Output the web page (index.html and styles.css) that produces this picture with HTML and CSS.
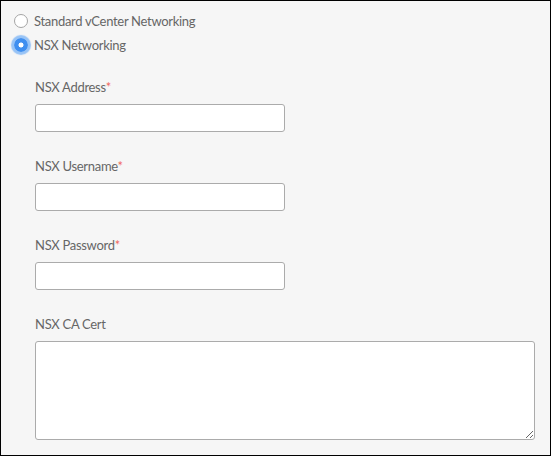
FILE: index.html
```html
<!DOCTYPE html>
<html>
<head>
<meta charset="utf-8">
<link rel="stylesheet" href="styles.css">
</head>
<body>
<div class="frame">
  <div class="radios">
    <label class="radio-row"><span class="radio"></span><span class="radio-text">Standard vCenter Networking</span></label>
    <label class="radio-row"><span class="radio checked"></span><span class="radio-text">NSX Networking</span></label>
  </div>
  <div class="form">
    <div class="field">
      <div class="field-label">NSX Address<span class="req">*</span></div>
      <input class="text-input" type="text">
    </div>
    <div class="field">
      <div class="field-label">NSX Username<span class="req">*</span></div>
      <input class="text-input" type="text">
    </div>
    <div class="field">
      <div class="field-label">NSX Password<span class="req">*</span></div>
      <input class="text-input" type="password">
    </div>
    <div class="field">
      <div class="field-label">NSX CA Cert</div>
      <textarea class="text-area"></textarea>
    </div>
  </div>
</div>
</body>
</html>
```
FILE: styles.css
```css
html, body {
  margin: 0;
  padding: 0;
}
body {
  font-family: Lato, "Open Sans", sans-serif;
  font-size: 13px;
  letter-spacing: -0.3px;
  color: #666;
}
.frame {
  width: 551px;
  height: 456px;
  box-sizing: border-box;
  border: 1px solid #000;
  background: #f6f6f6;
  padding-top: 8px;
  overflow: hidden;
}
.radios {
  display: flex;
  flex-direction: column;
  padding-left: 13px;
}
.radio-row {
  display: flex;
  align-items: center;
  height: 24px;
  gap: 6px;
}
.radio {
  width: 14px;
  height: 14px;
  box-sizing: border-box;
  border-radius: 50%;
  border: 1px solid #a5a5a5;
  background: #fff;
  flex: none;
}
.radio.checked {
  border: none;
  background: radial-gradient(circle, #fff 0 2.2px, #3f8ff0 2.8px);
  box-shadow: 0 0 1px 3px #97c3f6;
}
.radio-text {
  line-height: 16px;
}
.form {
  display: flex;
  flex-direction: column;
  gap: 26px;
  padding-left: 34px;
  margin-top: 22px;
}
.field {
  display: flex;
  flex-direction: column;
  gap: 9px;
  align-items: flex-start;
}
.field-label {
  line-height: 16px;
}
.req {
  color: #f06a5e;
}
.text-input {
  width: 250px;
  height: 28px;
  box-sizing: border-box;
  border: 1px solid #ababab;
  border-radius: 3px;
  background: #fff;
  margin: 0;
  padding: 0 6px;
  font-family: inherit;
}
.text-area {
  width: 500px;
  height: 99px;
  box-sizing: border-box;
  border: 1px solid #ababab;
  border-radius: 3px;
  background: #fff;
  margin: 0;
  padding: 4px 6px;
  font-family: inherit;
  resize: both;
}
```
